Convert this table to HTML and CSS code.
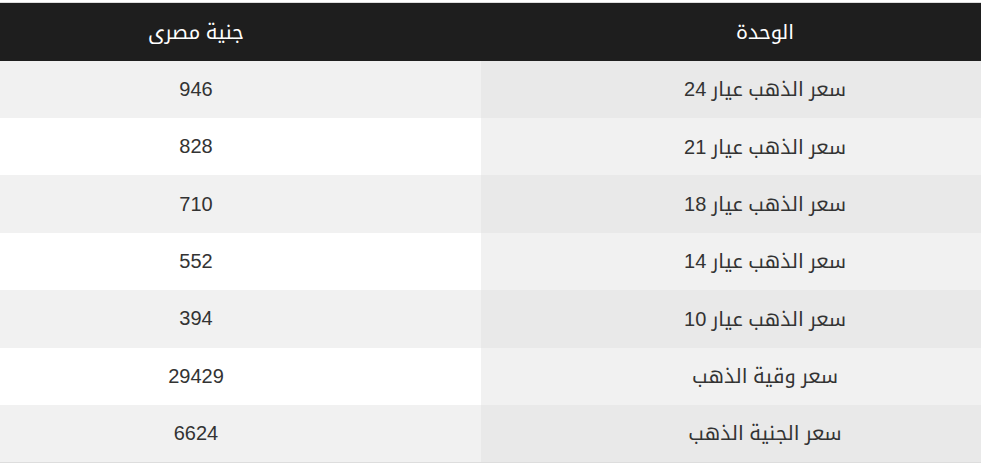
FILE: index.html
```html
<!DOCTYPE html>
<html lang="ar" dir="rtl">
<head>
<meta charset="utf-8">
<title>أسعار الذهب</title>
<link rel="stylesheet" href="styles.css">
</head>
<body>
<div class="frame">
  <table class="prices">
    <thead>
      <tr class="head-row">
        <th class="col-unit">الوحدة</th>
        <th class="col-price">جنية مصرى</th>
      </tr>
    </thead>
    <tbody>
      <tr class="row"><td class="col-unit">سعر الذهب عيار 24</td><td class="col-price">946</td></tr>
      <tr class="row"><td class="col-unit">سعر الذهب عيار 21</td><td class="col-price">828</td></tr>
      <tr class="row"><td class="col-unit">سعر الذهب عيار 18</td><td class="col-price">710</td></tr>
      <tr class="row"><td class="col-unit">سعر الذهب عيار 14</td><td class="col-price">552</td></tr>
      <tr class="row"><td class="col-unit">سعر الذهب عيار 10</td><td class="col-price">394</td></tr>
      <tr class="row"><td class="col-unit">سعر وقية الذهب</td><td class="col-price">29429</td></tr>
      <tr class="row"><td class="col-unit">سعر الجنية الذهب</td><td class="col-price">6624</td></tr>
    </tbody>
  </table>
</div>
</body>
</html>
```

FILE: styles.css
```css
html, body {
  margin: 0;
  padding: 0;
  background: #ffffff;
}
body {
  width: 981px;
  height: 465px;
  overflow: hidden;
  font-family: "Liberation Sans", "Noto Kufi Arabic", "Droid Arabic Kufi", "Noto Sans Arabic", "DejaVu Sans", sans-serif;
  color: #333333;
}
.frame {
  padding-top: 2px;
  width: 981px;
  overflow: hidden;
}
.prices {
  width: 1138px;
  margin-right: -68px;
  border-collapse: collapse;
  border-top: 1px solid #dddddd;
  border-bottom: 1px solid #dddddd;
  table-layout: fixed;
}
.col-unit {
  width: 568px;
}
.col-price {
  width: 570px;
}
.prices th,
.prices td {
  padding: 0;
  text-align: center;
  vertical-align: middle;
  font-size: 20px;
  font-weight: normal;
}
.head-row {
  height: 58px;
  background: #1e1e1e;
}
.head-row th {
  color: #ffffff;
}
.row {
  height: 57.43px;
}
.row:nth-child(odd) .col-price {
  background: #f1f1f1;
}
.row:nth-child(odd) .col-unit {
  background: #e9e9e9;
}
.row:nth-child(even) .col-price {
  background: #ffffff;
}
.row:nth-child(even) .col-unit {
  background: #f1f1f1;
}
```
